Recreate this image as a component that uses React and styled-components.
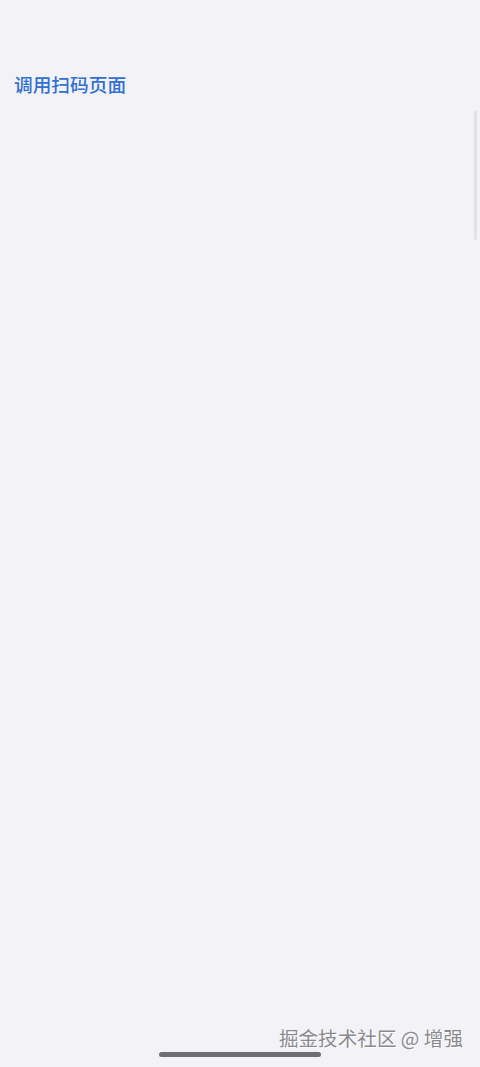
import React from "react";
import styled, { createGlobalStyle } from "styled-components";

const GlobalStyle = createGlobalStyle`
	html, body {
		margin: 0;
		padding: 0;
		background: #f2f2f7;
	}
	body {
		font-family: "Noto Sans CJK SC", "Noto Sans", sans-serif;
	}
`;

const Screen = styled.div`
	position: relative;
	width: 480px;
	height: 1067px;
	background-color: #f2f2f7;
	overflow: hidden;
	display: flex;
	flex-direction: column;
`;

const Content = styled.main`
	flex: 1;
	padding: 71px 14px 0;
`;

const LinkButton = styled.button`
	border: none;
	background: none;
	padding: 0;
	color: #3170d0;
	font-family: "Noto Sans CJK SC", sans-serif;
	font-size: 18.7px;
	font-weight: 500;
	line-height: 26px;
	cursor: pointer;
`;

const Footer = styled.footer`
	display: flex;
	flex-direction: column;
	align-items: center;
	padding-bottom: 10px;
`;

const Watermark = styled.span`
	align-self: flex-end;
	margin-right: 17px;
	color: #8a8a8e;
	font-family: "Noto Sans CJK SC", sans-serif;
	font-size: 19.6px;
	line-height: 24px;
	text-shadow: 0 0 1px #fff, 1px 1px 0 #fff;
`;

const HomeIndicator = styled.div`
	width: 162px;
	height: 5px;
	margin-top: 2px;
	border-radius: 3px;
	background-color: #6f6f74;
`;

const ScrollHint = styled.div`
	position: absolute;
	right: 3px;
	top: 110px;
	width: 3px;
	height: 130px;
	border-radius: 2px;
	background-color: rgba(200, 200, 210, 0.4);
`;

export default function App() {
	return (
		<>
			<GlobalStyle />
			<Screen>
				<Content>
					<LinkButton>调用扫码页面</LinkButton>
				</Content>
				<Footer>
					<Watermark>掘金技术社区 @ 增强</Watermark>
					<HomeIndicator />
				</Footer>
				<ScrollHint />
			</Screen>
		</>
	);
}
